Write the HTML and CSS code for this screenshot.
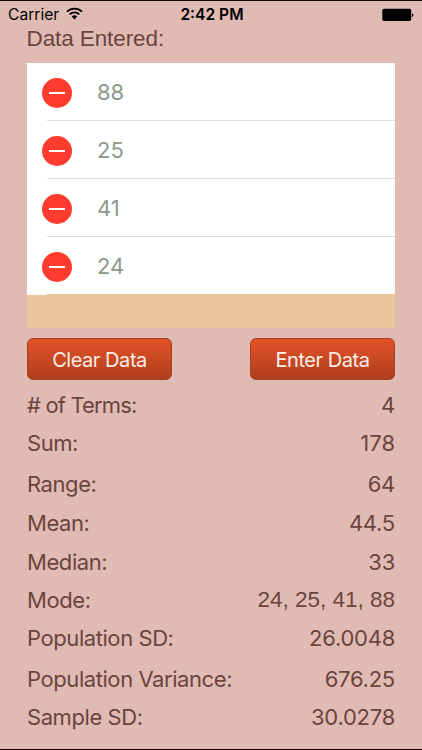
FILE: index.html
```html
<!DOCTYPE html>
<html lang="en">
<head>
  <meta charset="UTF-8">
  <meta name="viewport" content="width=device-width, initial-scale=1.0">
  <title>Statistics</title>
  <link rel="stylesheet" href="styles.css">
</head>
<body>
  <div class="status-bar">
    <div class="carrier">
      <span>Carrier</span>
      <svg class="wifi" width="17" height="13" viewBox="0 0 17 13">
        <path d="M1 4.7a10.6 10.6 0 0 1 15 0M3.7 7.4a6.8 6.8 0 0 1 9.6 0" fill="none" stroke="#000" stroke-width="1.9"/>
        <path d="M5.7 9.5a4 4 0 0 1 5.6 0L8.5 12.4z"/>
      </svg>
    </div>
    <div class="time">2:42 PM</div>
    <svg class="battery" width="33" height="14" viewBox="0 0 33 14">
      <rect x="1.3" y="0.8" width="28.9" height="12.2" rx="1.8"/>
      <path d="M31 5.2c1.8.3 1.8 3.4 0 3.7z"/>
    </svg>
  </div>
  <main>
    <h1>Data Entered:</h1>
    <ul class="data-list">
      <li><span class="delete"></span><span class="value">88</span></li>
      <li><span class="delete"></span><span class="value">25</span></li>
      <li><span class="delete"></span><span class="value">41</span></li>
      <li><span class="delete"></span><span class="value">24</span></li>
    </ul>
    <div class="buttons">
      <button type="button">Clear Data</button>
      <button type="button">Enter Data</button>
    </div>
    <dl class="stats">
      <div><dt class="terms"># of Terms:</dt><dd>4</dd></div>
      <div class="short"><dt>Sum:</dt><dd class="sum">178</dd></div>
      <div class="tall"><dt>Range:</dt><dd>64</dd></div>
      <div><dt>Mean:</dt><dd>44.5</dd></div>
      <div><dt>Median:</dt><dd>33</dd></div>
      <div class="short"><dt>Mode:</dt><dd class="mode">24, 25, 41, 88</dd></div>
      <div class="short"><dt>Population SD:</dt><dd>26.0048</dd></div>
      <div class="tall"><dt>Population Variance:</dt><dd>676.25</dd></div>
      <div class="short"><dt>Sample SD:</dt><dd>30.0278</dd></div>
    </dl>
  </main>
</body>
</html>
```
FILE: styles.css
```css
* {
  box-sizing: border-box;
}
body {
  margin: 0;
  height: 750px;
  overflow: hidden;
  background-color: #e0bbb4;
  border-top: 1px solid #140605;
  border-bottom: 1px solid #140605;
  color: #6b443d;
  font-family: Inter, "Liberation Sans", sans-serif;
  font-size: 22px;
}
.status-bar {
  display: grid;
  grid-template-columns: 1fr auto 1fr;
  align-items: center;
  height: 26px;
  padding: 1px 8px 0;
  color: #000;
  font-size: 15.6px;
}
.carrier {
  display: flex;
  align-items: center;
  gap: 7px;
}
.wifi {
  margin-top: -2px;
}
.time {
  padding-left: 2px;
  font-weight: 600;
}
.battery {
  justify-self: end;
}
main {
  padding: 0 27px;
}
h1 {
  margin: 0 0 0 -0.5px;
  height: 36px;
  font-family: "Liberation Sans", Arial, sans-serif;
  font-size: 22.5px;
  font-weight: normal;
  letter-spacing: -0.1px;
  line-height: 24px;
}
.data-list {
  margin: 0;
  padding: 0;
  height: 265px;
  list-style: none;
  background-color: #eac49a;
}
.data-list li {
  display: flex;
  align-items: center;
  gap: 25px;
  height: 58px;
  padding: 2px 0 0 15px;
  background: linear-gradient(#dcdcdc, #dcdcdc) 20px 100% / 100% 1px no-repeat #fff;
  color: #8c998c;
}
.data-list li:last-child {
  background-image: linear-gradient(#eac49a, #eac49a);
}
.value {
  margin-top: -3px;
}
.delete {
  display: flex;
  align-items: center;
  justify-content: center;
  width: 30px;
  height: 30px;
  border-radius: 50%;
  background-color: #ff3b30;
}
.delete::before {
  content: "";
  width: 16px;
  height: 2px;
  background-color: #fff;
}
.buttons {
  display: flex;
  justify-content: space-between;
  padding-top: 10px;
}
button {
  width: 145px;
  height: 42px;
  padding: 1px 0 0;
  border: 1px solid #a8401f;
  border-radius: 6px;
  background: linear-gradient(#e35228, #ae3e1d);
  color: #fdeee6;
  font-family: inherit;
  font-size: 20px;
  letter-spacing: -0.45px;
}
.stats {
  margin: 5px 0 0;
}
.stats div {
  display: flex;
  justify-content: space-between;
  align-items: flex-end;
  height: 39px;
  line-height: 38px;
}
.stats .tall {
  height: 41px;
}
.stats .short {
  height: 38px;
}
.stats dt {
  letter-spacing: -0.43px;
}
.stats .terms {
  letter-spacing: -0.85px;
}
.stats dd {
  margin: 0;
  letter-spacing: -0.25px;
}
.stats .sum {
  letter-spacing: 0;
}
.stats .mode {
  font-family: "Liberation Sans", Arial, sans-serif;
  font-size: 22.5px;
  letter-spacing: 0;
}
```
